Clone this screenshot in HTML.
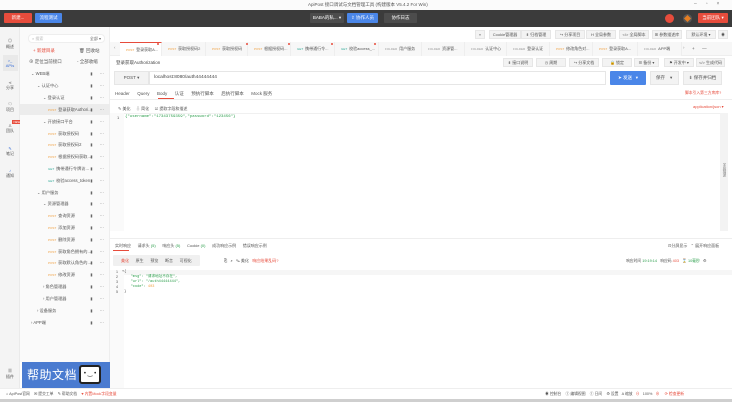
<!DOCTYPE html>
<html><head><meta charset="utf-8"><style>
*{margin:0;padding:0;box-sizing:border-box}
body{width:732px;height:402px;overflow:hidden;background:#fff;font-family:"Liberation Sans","Noto Sans CJK SC",sans-serif;font-size:4.5px;color:#555;position:relative}
.a{position:absolute;white-space:nowrap}
.btn{position:absolute;border-radius:1px;text-align:center;color:#fff;font-size:4.5px}
.tb{position:absolute;background:#f3f3f3;border:1px solid #e6e6e6;font-size:4px;text-align:center;color:#555;height:9px;line-height:7px}
.tab{position:absolute;top:42px;height:14px;border-right:1px solid #eee;background:#f7f7f7;font-size:4px;line-height:14px;padding-left:6px;color:#555}
.tab b{font-weight:normal;color:#f0a040;font-size:3px;margin-right:2px}
.tab i{font-style:normal;color:#999;font-size:3px;margin-right:2px}
.row{position:absolute;left:20px;width:90px;height:11px;line-height:11px;font-size:4.2px;color:#555}
.row .m{font-size:3px;color:#f0a040;margin-right:2px}
.row .g{font-size:3px;color:#3a9;margin-right:2px}
.row .r{position:absolute;right:3px;top:0;color:#666;letter-spacing:3px}
.ic{position:absolute;left:0;width:20px;text-align:center;font-size:4px;color:#555}
</style></head><body>
<div class="a" style="left:0;top:0;width:732px;height:10px;background:#fbfbfb"></div>
<div class="a" style="left:308px;top:2px;font-size:4.5px;color:#555">ApiPost 接口调试与文档管理工具 (构建版本 V5.4.2 For Win)</div>
<div class="a" style="left:694px;top:1px;font-size:5px;color:#777;letter-spacing:9px">–▫×</div>
<div class="a" style="left:0;top:10px;width:732px;height:17px;background:#3b3b3b"></div>
<div class="btn" style="left:4px;top:13px;width:28px;height:10px;background:#e74c3c;line-height:10px">新建...</div>
<div class="btn" style="left:35px;top:13px;width:27px;height:10px;background:#4a86e8;line-height:10px">流程测试</div>
<div class="btn" style="left:310px;top:13px;width:34px;height:10px;background:#4c4c4c;line-height:10px">BABA的私... ▾</div>
<div class="btn" style="left:347px;top:13px;width:31px;height:10px;background:#4a86e8;line-height:10px">⇪ 协作人员</div>
<div class="btn" style="left:384px;top:13px;width:33px;height:10px;background:#4c4c4c;line-height:10px">协作日志</div>
<div class="a" style="left:665px;top:14px;width:9px;height:9px;border-radius:50%;background:#e74c3c"></div>
<div class="a" style="left:683px;top:14px;width:9px;height:9px;border-radius:50%;background:#555"></div>
<div class="a" style="left:685px;top:16px;width:5px;height:5px;background:#e67e22;transform:rotate(45deg)"></div>
<div class="btn" style="left:698px;top:13px;width:30px;height:10px;background:#e74c3c;line-height:10px">当前团队 ▾</div>
<div class="a" style="left:0;top:27px;width:20px;height:362px;background:#f4f4f4;border-right:1px solid #eaeaea"></div>
<div class="ic" style="top:38px">◎<br>概述</div>
<div class="a" style="left:3px;top:55px;width:15px;height:16px;background:#e9e9e9"></div>
<div class="ic" style="top:58px;color:#3a6fd8">&gt;_<br>APIs</div>
<div class="ic" style="top:80px">⋖<br>分享</div>
<div class="ic" style="top:101px">☁<br>项目</div>
<div class="a" style="left:12px;top:120px;width:10px;height:4px;background:#e74c3c;color:#fff;font-size:3px;line-height:4px;text-align:center">NEW</div>
<div class="ic" style="top:123px">♙<br>团队</div>
<div class="ic" style="top:146px;color:#3a6fd8">✎<br><span style="color:#555">笔记</span></div>
<div class="ic" style="top:168px;color:#3a6fd8">♪<br><span style="color:#555">通知</span></div>
<div class="ic" style="top:368px">▦<br>插件</div>
<div class="a" style="left:20px;top:27px;width:90px;height:335px;background:#fafafa;border-right:1px solid #eee"></div>
<div class="a" style="left:28px;top:34px;width:77px;height:9px;background:#fff;border:1px solid #eee;border-radius:4px;font-size:4px;line-height:7px;padding-left:3px;color:#bbb">⌕ 搜索<span style="position:absolute;right:3px;color:#666">全部 ▾</span></div>
<div class="a" style="left:33px;top:48px;color:#e74c3c">+ 新建目录</div>
<div class="a" style="left:79px;top:48px">🗑 回收站</div>
<div class="a" style="left:29px;top:59px">⊕ 定位当前接口</div>
<div class="a" style="left:77px;top:59px">- 全部收缩</div>
<div class="a" style="left:20px;top:104px;width:90px;height:11px;background:#ececec"></div>
<div class="row" style="top:68px;padding-left:11px">⌄ WEB端<span class="r">▮ ⋯</span></div>
<div class="row" style="top:80px;padding-left:17px">⌄ 认证中心<span class="r">▮ ⋯</span></div>
<div class="row" style="top:92px;padding-left:23px">⌄ 登录认证<span class="r">▮ ⋯</span></div>
<div class="row" style="top:104px;padding-left:28px"><span class="m">POST</span>登录获取Authori...<span class="r">▮ ⋯</span></div>
<div class="row" style="top:116px;padding-left:23px">⌄ 开放接口平台<span class="r">▮ ⋯</span></div>
<div class="row" style="top:128px;padding-left:28px"><span class="m">POST</span>获取授权码<span class="r">▮ ⋯</span></div>
<div class="row" style="top:139px;padding-left:28px"><span class="m">POST</span>获取授权码2<span class="r">▮ ⋯</span></div>
<div class="row" style="top:151px;padding-left:28px"><span class="m">POST</span>根据授权码获取...<span class="r">▮ ⋯</span></div>
<div class="row" style="top:163px;padding-left:28px"><span class="g">GET</span>携带通行令牌访...<span class="r">▮ ⋯</span></div>
<div class="row" style="top:175px;padding-left:28px"><span class="g">GET</span>校验access_token<span class="r">▮ ⋯</span></div>
<div class="row" style="top:187px;padding-left:17px">⌄ 用户服务<span class="r">▮ ⋯</span></div>
<div class="row" style="top:198px;padding-left:23px">⌄ 资源管理器<span class="r">▮ ⋯</span></div>
<div class="row" style="top:210px;padding-left:28px"><span class="m">POST</span>查询资源<span class="r">▮ ⋯</span></div>
<div class="row" style="top:222px;padding-left:28px"><span class="m">POST</span>添加资源<span class="r">▮ ⋯</span></div>
<div class="row" style="top:234px;padding-left:28px"><span class="m">POST</span>删除资源<span class="r">▮ ⋯</span></div>
<div class="row" style="top:246px;padding-left:28px"><span class="m">POST</span>获取角色拥有的...<span class="r">▮ ⋯</span></div>
<div class="row" style="top:257px;padding-left:28px"><span class="m">POST</span>获取默认角色的...<span class="r">▮ ⋯</span></div>
<div class="row" style="top:269px;padding-left:28px"><span class="m">POST</span>修改资源<span class="r">▮ ⋯</span></div>
<div class="row" style="top:281px;padding-left:23px">› 角色管理器<span class="r">▮ ⋯</span></div>
<div class="row" style="top:293px;padding-left:23px">› 用户管理器<span class="r">▮ ⋯</span></div>
<div class="row" style="top:305px;padding-left:17px">› 设备服务<span class="r">▮ ⋯</span></div>
<div class="row" style="top:317px;padding-left:11px">› APP端<span class="r">▮ ⋯</span></div>
<div class="a" style="left:22px;top:362px;width:88px;height:26px;background:#4a7bd0"></div>
<div class="a" style="left:27px;top:366px;font-size:12px;color:#fff;letter-spacing:0.5px">帮助文档</div>
<div class="a" style="left:79px;top:365px;width:22px;height:19px;background:#fff;border:2px solid #222;border-radius:3px;font-size:6px;text-align:center;line-height:14px;color:#222">• ‿ •</div>
<div class="tb" style="left:475px;top:30px;width:10px">«</div>
<div class="tb" style="left:489px;top:30px;width:32px">Cookie管理器</div>
<div class="tb" style="left:521px;top:30px;width:30px">⇟ 归档管理</div>
<div class="tb" style="left:555px;top:30px;width:30px">↪ 分享项目</div>
<div class="tb" style="left:586px;top:30px;width:30px">H 全局参数</div>
<div class="tb" style="left:619px;top:30px;width:30px">&lt;/&gt; 全局脚本</div>
<div class="tb" style="left:652px;top:30px;width:30px">⊞ 参数描述库</div>
<div class="tb" style="left:686px;top:30px;width:30px">默认环境 ▾</div>
<div class="tb" style="left:718px;top:30px;width:10px">◉</div>
<div class="a" style="left:110px;top:42px;width:622px;height:14px;background:#f7f7f7;border-bottom:1px solid #eee"></div>
<div class="a" style="left:114px;top:45px;color:#888">‹</div>
<div class="tab" style="left:120px;width:42px;background:#fff;border-top:1px solid #e74c3c"><b>POST</b>登录获取A...</div>
<div class="tab" style="left:162px;width:44px"><b>POST</b>获取授权码2</div>
<div class="tab" style="left:206px;width:42px"><b>POST</b>获取授权码</div>
<div class="tab" style="left:248px;width:43px"><b>POST</b>根据授权码...</div>
<div class="tab" style="left:291px;width:44px"><i style="color:#3a9">GET</i>携带通行令...</div>
<div class="tab" style="left:335px;width:44px"><i style="color:#3a9">GET</i>校验access_...</div>
<div class="tab" style="left:379px;width:43px"><i>FOLDER</i>用户服务</div>
<div class="tab" style="left:422px;width:43px"><i>FOLDER</i>资源管...</div>
<div class="tab" style="left:465px;width:42px"><i>FOLDER</i>认证中心</div>
<div class="tab" style="left:507px;width:43px"><i>FOLDER</i>登录认证</div>
<div class="tab" style="left:550px;width:43px"><b>POST</b>修改角色对...</div>
<div class="tab" style="left:593px;width:45px"><b>POST</b>登录获取A...</div>
<div class="tab" style="left:638px;width:44px"><i>FOLDER</i>APP端</div>
<div class="a" style="left:157px;top:43px;width:2px;height:2px;border-radius:50%;background:#e74c3c"></div>
<div class="a" style="left:246px;top:43px;width:2px;height:2px;border-radius:50%;background:#e74c3c"></div>
<div class="a" style="left:288px;top:43px;width:2px;height:2px;border-radius:50%;background:#e74c3c"></div>
<div class="a" style="left:331px;top:43px;width:2px;height:2px;border-radius:50%;background:#e74c3c"></div>
<div class="a" style="left:374px;top:43px;width:2px;height:2px;border-radius:50%;background:#e74c3c"></div>
<div class="a" style="left:683px;top:45px;color:#888">›</div>
<div class="a" style="left:692px;top:46px;color:#555">+ &nbsp;&nbsp;&nbsp;&nbsp; —</div>
<div class="a" style="left:116px;top:60px;color:#444">登录获取Authorization</div>
<div class="tb" style="left:503px;top:58px;width:30px">⇟ 接口说明</div>
<div class="tb" style="left:536px;top:58px;width:30px">◷ 周期</div>
<div class="tb" style="left:569px;top:58px;width:30px">↪ 分享文档</div>
<div class="tb" style="left:602px;top:58px;width:30px">🔒 锁定</div>
<div class="tb" style="left:634px;top:58px;width:25px">☰ 备份 ▾</div>
<div class="tb" style="left:664px;top:58px;width:30px">⚑ 开发中 ▾</div>
<div class="tb" style="left:696px;top:58px;width:29px">&lt;/&gt; 生成代码</div>
<div class="a" style="left:114px;top:71px;width:35px;height:14px;background:#f3f3f3;border:1px solid #e6e6e6;line-height:12px;text-align:center">POST ▾</div>
<div class="a" style="left:149px;top:71px;width:457px;height:14px;border:1px solid #e6e6e6;line-height:12px;padding-left:4px;color:#444;font-size:4.8px">localhost:8080/auth44444444</div>
<div class="btn" style="left:610px;top:71px;width:36px;height:14px;background:#4a86e8;line-height:14px">➤ 发送 &nbsp; ▾</div>
<div class="a" style="left:650px;top:71px;width:29px;height:14px;background:#f3f3f3;border:1px solid #e6e6e6;line-height:12px;padding-left:5px">保存 &nbsp;&nbsp;&nbsp;▾</div>
<div class="a" style="left:683px;top:71px;width:39px;height:14px;background:#f3f3f3;border:1px solid #e6e6e6;line-height:12px;text-align:center">⇟ 保存并归档</div>
<div class="a" style="left:685px;top:91px;color:#e74c3c;font-size:3.8px">脚本引入第三方库库?</div>
<div class="a" style="left:110px;top:99px;width:622px;height:1px;background:#eee"></div>
<div class="a" style="left:115px;top:91px;color:#555">Header &nbsp;&nbsp;&nbsp;&nbsp; Query &nbsp;&nbsp;&nbsp;&nbsp; Body &nbsp;&nbsp;&nbsp;&nbsp; 认证 &nbsp;&nbsp;&nbsp;&nbsp; 预执行脚本 &nbsp;&nbsp;&nbsp;&nbsp; 后执行脚本 &nbsp;&nbsp;&nbsp;&nbsp; Mock 服务</div>
<div class="a" style="left:158px;top:98px;width:16px;height:1px;background:#e74c3c"></div>
<div class="a" style="left:693px;top:104px;color:#e74c3c;font-size:4px">application/json ▾</div>
<div class="a" style="left:118px;top:106px;font-size:4px">✎ 美化 &nbsp;&nbsp;&nbsp; ⇩ 简化 &nbsp;&nbsp;&nbsp; ☑ 提取字段和描述</div>
<div class="a" style="left:110px;top:113px;width:610px;height:118px;background:#fff;border-top:1px solid #f0f0f0"></div>
<div class="a" style="left:110px;top:113px;width:14px;height:118px;background:#fafafa"></div>
<div class="a" style="left:117px;top:115px;font-size:4px;color:#555">1</div>
<div class="a" style="left:125px;top:115px;font-size:4px;color:#2a9d4a;font-family:'Liberation Mono',monospace">{"username":"17343759359","password":"123456"}</div>
<div class="a" style="left:720px;top:113px;width:8px;height:118px;background:#f3f3f3;font-size:3.5px;writing-mode:vertical-rl;padding-top:50px;color:#777">字段描述</div>
<div class="a" style="left:110px;top:238px;width:622px;height:1px;background:#eee"></div>
<div class="a" style="left:115px;top:243px;font-size:4px;color:#555">实时响应 &nbsp;&nbsp;&nbsp;&nbsp; 请求头 <span style="color:#2a9d4a">(5)</span> &nbsp;&nbsp;&nbsp;&nbsp; 响应头 <span style="color:#2a9d4a">(5)</span> &nbsp;&nbsp;&nbsp;&nbsp; Cookie <span style="color:#2a9d4a">(0)</span> &nbsp;&nbsp;&nbsp;&nbsp; 成功响应示例 &nbsp;&nbsp;&nbsp;&nbsp; 错误响应示例</div>
<div class="a" style="left:113px;top:250px;width:16px;height:1px;background:#e74c3c"></div>
<div class="a" style="left:668px;top:243px;font-size:4px">⊡分屏显示 &nbsp; ⌃ 展开响应面板</div>
<div class="a" style="left:113px;top:255px;width:87px;height:11px;background:#f0f0f0;border-radius:1px;font-size:4px;line-height:11px;padding-left:8px;color:#555"><span style="color:#e74c3c">美化</span> &nbsp;&nbsp;&nbsp;&nbsp; 原生 &nbsp;&nbsp;&nbsp;&nbsp; 预览 &nbsp;&nbsp;&nbsp;&nbsp; 断言 &nbsp;&nbsp;&nbsp;&nbsp; 可视化</div>
<div class="a" style="left:224px;top:258px;font-size:4px">⎘ &nbsp; ⌕ &nbsp; ✎ 美化 &nbsp; <span style="color:#e74c3c">响应结果乱码?</span></div>
<div class="a" style="left:626px;top:258px;font-size:3.8px">响应时间 <span style="color:#2a9d4a">19:19:14</span> &nbsp; 响应码 <span style="color:#e74c3c">403</span> &nbsp; ⌛ <span style="color:#2a9d4a">10毫秒</span> &nbsp; ⚙</div>
<div class="a" style="left:110px;top:270px;width:14px;height:118px;background:#fafafa"></div>
<div class="a" style="left:124px;top:270px;width:608px;height:5px;background:#f6f6f6"></div>
<div class="a" style="left:116px;top:270px;font-size:3.6px;line-height:4.9px;color:#555">1<br>2<br>3<br>4<br>5</div>
<div class="a" style="left:122px;top:270px;font-size:3.6px;line-height:4.9px;font-family:'Liberation Mono',monospace;color:#555">▾{<br>&nbsp;&nbsp;&nbsp;&nbsp;<span style="color:#2a9d4a">"msg": "请求地址不存在",</span><br>&nbsp;&nbsp;&nbsp;&nbsp;<span style="color:#2a9d4a">"url": "/auth44444444",</span><br>&nbsp;&nbsp;&nbsp;&nbsp;<span style="color:#2a9d4a">"code":</span> <span style="color:#f0a040">403</span><br>&nbsp;}</div>
<div class="a" style="left:0;top:388px;width:732px;height:11px;background:#fff;border-top:1px solid #eee"></div>
<div class="a" style="left:6px;top:391px;font-size:3.8px;color:#555">⌂ ApiPost官网 &nbsp;&nbsp; ✉ 提交工单 &nbsp;&nbsp; ✎ 帮助文档 &nbsp;&nbsp; <span style="color:#e74c3c">♥ 内置Mock字段变量</span></div>
<div class="a" style="left:545px;top:391px;font-size:3.8px;color:#555">◉ 控制台 &nbsp;&nbsp; ① 编辑视图 &nbsp;&nbsp; ① 日间 &nbsp;&nbsp; ⚙ 设置 &nbsp; A 缩放 &nbsp; <span style="color:#e74c3c">⊖</span> &nbsp; 100% &nbsp; <span style="color:#e74c3c">⊕</span> &nbsp;&nbsp;&nbsp; <span style="color:#e74c3c">⟳ 检查更新</span></div>
<div class="a" style="left:0;top:399px;width:732px;height:3px;background:#cfcfcf"></div>
</body></html>
